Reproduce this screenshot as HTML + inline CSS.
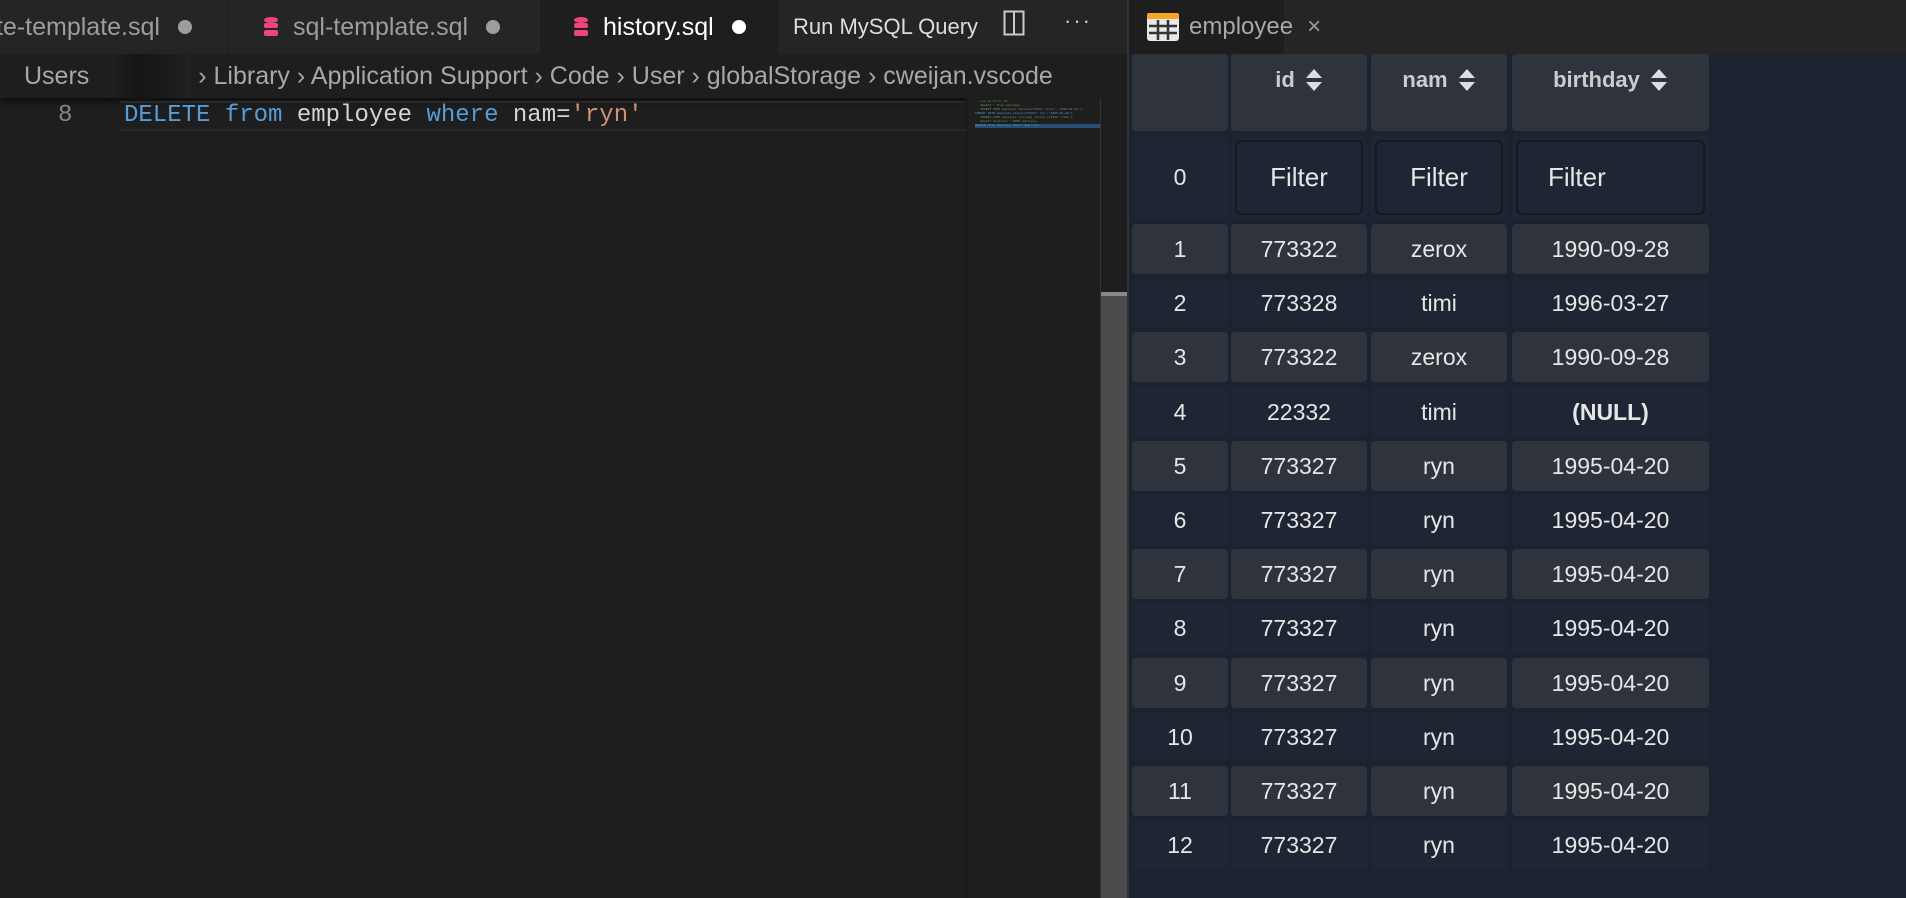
<!DOCTYPE html>
<html><head><meta charset="utf-8"><style>
*{box-sizing:border-box;margin:0;padding:0}
body{width:1906px;height:898px;overflow:hidden;background:#1e1e1e;font-family:"Liberation Sans",sans-serif;position:relative}
.abs{position:absolute}
.tabbar{left:0;top:0;width:1129px;height:54px;background:#252526}
.tab{top:0;height:54px;display:flex;align-items:center;font-size:25px;color:#9d9d9d;white-space:nowrap}
.tab svg{flex-shrink:0}
.dot{width:14px;height:14px;border-radius:50%;background:#9d9d9d;display:inline-block;margin-left:18px;flex-shrink:0}
.db{display:inline-block;width:16px;height:22px;margin-right:14px}
.crumb{left:0;top:54px;width:1129px;height:44px;background:#1e1e1e;color:#a8a8a8;font-size:25px;line-height:44px;white-space:nowrap;overflow:hidden;box-shadow:0 4px 5px rgba(0,0,0,.5)}
.code{font-family:"Liberation Mono",monospace;font-size:24px;color:#d4d4d4}
.rp{left:1129px;top:54px;width:777px;height:844px;background:#1c2330}
.cell{position:absolute;border-radius:4px;display:flex;align-items:center;justify-content:center;color:#e6e6e6;font-size:23px}
.lt{background:#2e333c}
.dk{background:#1f2633}
</style></head><body>
<div class="abs tabbar"></div>
<div class="abs tab" style="left:0;width:229px;border-right:1px solid #1e1e1e;overflow:hidden"><span style="margin-left:-4px">te-template.sql</span><span class="dot"></span></div>
<div class="abs tab" style="left:229px;width:312px;padding-left:34px;border-right:1px solid #1e1e1e">
<svg class="db" viewBox="0 0 16 22"><ellipse cx="8" cy="4" rx="7" ry="3" fill="#f0457a"/><rect x="1" y="7" width="14" height="5" rx="2" fill="#f0457a"/><rect x="1" y="14" width="14" height="6" rx="2" fill="#f0457a"/></svg>sql-template.sql<span class="dot"></span></div>
<div class="abs tab" style="left:541px;width:237px;background:#1e1e1e;padding-left:32px;color:#fff">
<svg class="db" viewBox="0 0 16 22"><ellipse cx="8" cy="4" rx="7" ry="3" fill="#f0457a"/><rect x="1" y="7" width="14" height="5" rx="2" fill="#f0457a"/><rect x="1" y="14" width="14" height="6" rx="2" fill="#f0457a"/></svg>history.sql<span class="dot" style="background:#fff"></span></div>
<div class="abs tab" style="left:793px;color:#ddd;font-size:22px">Run MySQL Query</div>
<svg class="abs" style="left:1003px;top:10px" width="22" height="26" viewBox="0 0 22 26"><rect x="1.5" y="1.5" width="19" height="23" fill="none" stroke="#ccc" stroke-width="2"/><line x1="11" y1="1" x2="11" y2="25" stroke="#ccc" stroke-width="2"/></svg>
<div class="abs" style="left:1064px;top:8px;color:#ccc;font-size:22px;letter-spacing:2px">···</div>
<div class="abs crumb"><span style="margin-left:24px">Users</span><span style="display:inline-block;width:80px;height:44px;vertical-align:top;margin-left:22px;background:linear-gradient(90deg,#202020,#151515,#1a1a1a,#222)"></span><span> › Library › Application Support › Code › User › globalStorage › cweijan.vscode</span></div>
<div class="abs" style="left:120px;top:101px;width:846px;height:30px;border-top:2px solid #282828;border-bottom:2px solid #282828"></div>
<div class="abs code" style="left:58px;top:101px;line-height:30px;color:#858585">8</div>
<div class="abs code" style="left:124px;top:101px;line-height:30px"><span style="color:#569cd6">DELETE</span> <span style="color:#569cd6">from</span> employee <span style="color:#569cd6">where</span> nam=<span style="color:#ce9178">'ryn'</span></div>
<div class="abs" style="left:966px;top:98px;width:134px;height:800px;background:#1e1e1e;border-left:1px solid #151515"></div>
<div class="abs" style="left:975px;top:100px;width:125px;font-family:'Liberation Mono',monospace;font-size:3px;line-height:4px;color:#6a9955">-- use my_first_db<br>-- SELECT * from employee<br>-- INSERT INTO employee values(773322,'zerox','1990-09-28');<br><span style="color:#569cd6">INSERT INTO employee values(773327,'ryn','1995-04-20');</span><br>-- INSERT INTO employee (id,nam) values (22332,'timi');<br>-- SELECT distinct * FROM employee;<br><span style="background:#264f78;color:#569cd6;display:block">DELETE from employee where nam='ryn'</span></div>
<div class="abs" style="left:1100px;top:98px;width:29px;height:800px;background:#1e1e1e;border-left:1px solid #333"></div>
<div class="abs" style="left:1101px;top:292px;width:28px;height:606px;background:#4b4b4b;border-top:4px solid #888"></div>
<div class="abs" style="left:1127px;top:0;width:2px;height:898px;background:#333"></div>
<div class="abs" style="left:1129px;top:0;width:777px;height:54px;background:#252526"></div>
<div class="abs tab" style="left:1129px;width:155px;background:#1e1e1e;padding-left:18px;color:#a8a8a8;font-size:24px">
<svg width="32" height="28" viewBox="0 0 32 28" style="margin-right:10px"><rect x="0" y="0" width="32" height="28" rx="3" fill="#e8e8e8"/><rect x="0" y="0" width="32" height="6" rx="2" fill="#f5a623"/><path d="M11 7V27M21 7V27M2 13H30M2 20H30" stroke="#333" stroke-width="2.5"/></svg>employee<span style="margin-left:14px;font-size:24px;color:#999">×</span></div>
<div class="abs rp"></div>
<div id="t"></div>
<script>
var cols=[[1132,96],[1231,136],[1371,136],[1512,197]];
var h='';
function c(x,y,w,hh,cls,txt,extra){h+='<div class="cell '+cls+'" style="left:'+x+'px;top:'+y+'px;width:'+w+'px;height:'+hh+'px;'+(extra||'')+'">'+txt+'</div>';}
var arr='<svg width="18" height="24" viewBox="0 0 18 24" style="margin-left:10px"><path d="M9 1L17 10H1Z M9 23L17 14H1Z" fill="#ddd"/></svg>';
c(1132,54,96,77,'lt','');
c(1231,54,136,77,'lt','<span style="margin-top:-26px;display:flex;align-items:center;font-weight:bold;color:#ccc;font-size:22px">id'+arr+'</span>');
c(1371,54,136,77,'lt','<span style="margin-top:-26px;display:flex;align-items:center;font-weight:bold;color:#ccc;font-size:22px">nam'+arr+'</span>');
c(1512,54,197,77,'lt','<span style="margin-top:-26px;display:flex;align-items:center;font-weight:bold;color:#ccc;font-size:22px">birthday'+arr+'</span>');
c(1132,136,96,83,'dk','0');
for(var i=1;i<4;i++){c(cols[i][0],136,cols[i][1],83,'dk','<div style="position:absolute;left:4px;top:4px;right:4px;bottom:4px;border:2px solid #141a24;border-radius:6px;display:flex;align-items:center;'+(i==3?'padding-left:30px':'justify-content:center')+';font-size:26px">Filter</div>');}
var d=[['773322','zerox','1990-09-28'],['773328','timi','1996-03-27'],['773322','zerox','1990-09-28'],['22332','timi','<b>(NULL)</b>']];
for(var r=1;r<=12;r++){var row=d[r-1]||['773327','ryn','1995-04-20'];var y=224+Math.round((r-1)*54.2);var cl=r%2?'lt':'dk';
c(1132,y,96,50,cl,r);c(1231,y,136,50,cl,row[0]);c(1371,y,136,50,cl,row[1]);c(1512,y,197,50,cl,row[2]);}
document.getElementById('t').innerHTML=h;
</script>
</body></html>
